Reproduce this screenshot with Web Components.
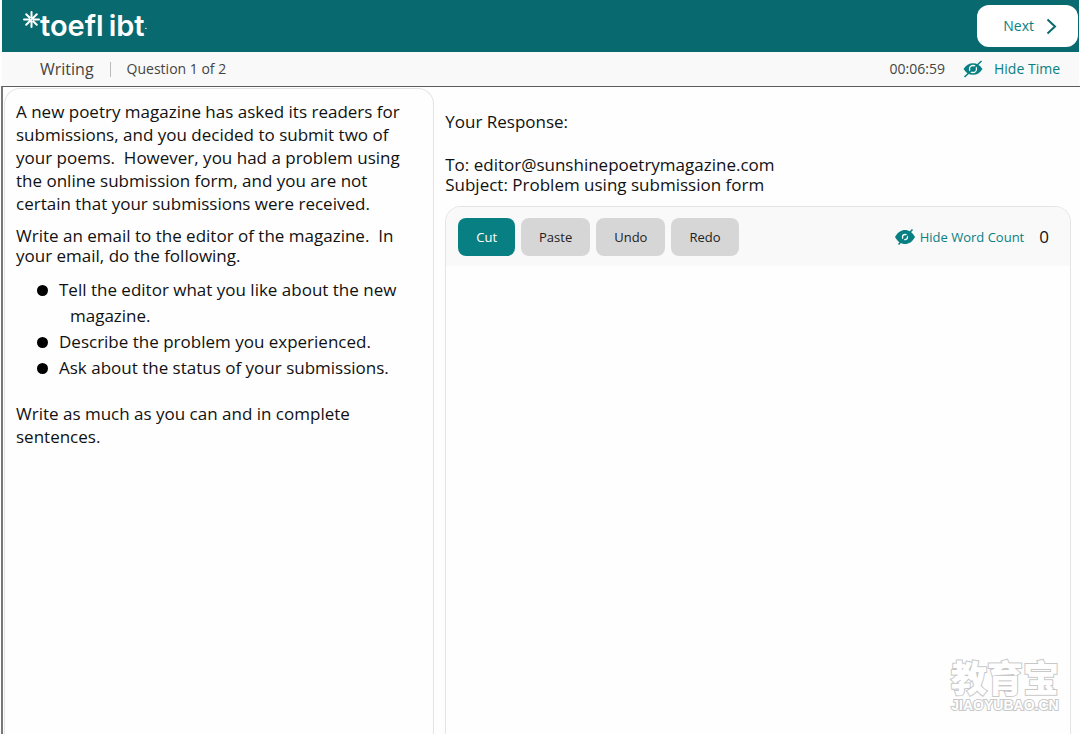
<!DOCTYPE html>
<html lang="en">
<head>
<meta charset="UTF-8">
<meta name="viewport" content="width=device-width, initial-scale=1.0">
<title>Writing - Question 1 of 2</title>
<style>
    html, body {
        margin: 0;
        height: 100%;
    }

    body {
        font-family: "Open Sans", "Noto Sans", sans-serif;
        color: #111;
        background: #fefefe;
        overflow: hidden;
        --teal-dark: #086a6e;
        --teal: #088083;
        --bar: #f9f9f9;
        --line: #e4e4e4;
    }
</style>
</head>
<body>
<toefl-app>
    <toefl-header slot="header"></toefl-header>
    <section-bar slot="bar" time="00:06:59">
        <span slot="section">Writing</span>
        <span slot="question">Question 1 of 2</span>
    </section-bar>
    <prompt-panel slot="prompt">
        <p>A new poetry magazine has asked its readers for submissions, and you decided to submit two of your poems.&nbsp; However, you had a problem using the online submission form, and you are not certain that your submissions were received.</p>
        <p class="tight">Write an email to the editor of the magazine.&nbsp; In your email, do the following.</p>
        <ul>
            <li>Tell the editor what you like about the new magazine.</li>
            <li>Describe the problem you experienced.</li>
            <li>Ask about the status of your submissions.</li>
        </ul>
        <p>Write as much as you can and in complete sentences.</p>
    </prompt-panel>
    <response-panel slot="response">
        <span slot="to">To: editor@sunshinepoetrymagazine.com</span>
        <span slot="subject">Subject: Problem using submission form</span>
    </response-panel>
    <site-watermark slot="mark"></site-watermark>
</toefl-app>

<script>
class ToeflApp extends HTMLElement {
    connectedCallback() {
        this.attachShadow({ mode: 'open' });
        this.shadowRoot.innerHTML = `
            <style>
                :host {
                    display: flex;
                    flex-direction: column;
                    height: 100vh;
                    position: relative;
                }

                .top {
                    margin: 0 1px 0 2px;
                }

                main {
                    flex: 1;
                    min-height: 0;
                    display: grid;
                    grid-template-columns: minmax(0, 11fr) minmax(0, 16fr);
                    column-gap: 11px;
                    margin-left: 1px;
                    padding: 1px 9px 0 1px;
                    border-left: 2px solid #777;
                    border-top: 1px solid #5c5c5c;
                }
            </style>

            <div class="top">
                <slot name="header"></slot>
                <slot name="bar"></slot>
            </div>
            <main>
                <slot name="prompt"></slot>
                <slot name="response"></slot>
            </main>
            <slot name="mark"></slot>
        `;
    }
}

class ToeflHeader extends HTMLElement {
    connectedCallback() {
        this.attachShadow({ mode: 'open' });
        this.shadowRoot.innerHTML = `
            <style>
                :host {
                    display: flex;
                    align-items: center;
                    justify-content: space-between;
                    height: 52px;
                    padding: 0 1px 0 21px;
                    background: var(--teal-dark);
                }

                .logo {
                    display: flex;
                    align-items: center;
                    color: #fff;
                    font: 600 29px/32px Inter, sans-serif;
                    text-decoration: none;
                }

                .logo svg {
                    width: 17px;
                    height: 17px;
                    margin-bottom: 13px;
                }

                .name {
                    display: flex;
                    gap: 5px;
                }

                small {
                    font-size: 8px;
                    align-self: flex-end;
                }

                button {
                    display: flex;
                    align-items: center;
                    gap: 12px;
                    height: 42px;
                    padding: 0 21px 0 26px;
                    border: 0;
                    border-radius: 12px;
                    background: #fff;
                    color: var(--teal);
                    font: 14px/20px "Open Sans", sans-serif;
                }

                button svg {
                    width: 11px;
                    height: 17px;
                }
            </style>

            <a class="logo" href="#">
                <svg viewBox="0 0 17 17" stroke="#fff" stroke-width="2" stroke-linecap="round">
                    <path d="M8.5 1v5M8.5 11v5M1 8.5h5M11 8.5h5M3.2 3.2l3.6 3.6M13.8 3.2L8.5 8.5l-5.3 5.3M10.2 10.2l3.6 3.6"/>
                </svg>
                <span class="name"><span>toefl</span><span>ibt</span></span><small>.</small>
            </a>
            <button type="button">
                Next
                <svg viewBox="0 0 11 17" fill="none" stroke="#086a6e" stroke-width="2">
                    <path d="M1.5 1.5l7.5 7-7.5 7"/>
                </svg>
            </button>
        `;
    }
}

// Crossed-out eye shared by the "Hide" buttons, "solid" has the heavier lids and a short slash
class EyeIcon extends HTMLElement {
    connectedCallback() {
        const solid = this.hasAttribute('solid');
        const lids = solid
            ? 'M0 9C3 4 6 2 10 2s7 2 10 7c-3 5-6 7-10 7S3 14 0 9z'
            : 'M.5 9C3 5 6 3.200 10 3.200S17 5 19.500 9C17 13 14 14.800 10 14.800S3 13 .5 9z';
        const slash = solid ? 'M3.500 16.500L17.500 1.500' : 'M1.500 17L18.500 1';

        this.attachShadow({ mode: 'open' });
        this.shadowRoot.innerHTML = `
            <style>
                :host {
                    display: block;
                    width: 20px;
                    height: 18px;
                }

                svg {
                    display: block;
                    width: 100%;
                    height: 100%;
                }
            </style>

            <svg viewBox="0 0 20 18">
                <path fill="#088083" d="${lids}"/>
                <circle cx="10" cy="9" r="${solid ? 2.5 : 3.5}" fill="none" stroke="#f9f9f9" stroke-width="1.300"/>
                <path d="${slash}" stroke="#088083" stroke-width="1.600"/>
            </svg>
        `;
    }
}

class SectionBar extends HTMLElement {
    connectedCallback() {
        this.attachShadow({ mode: 'open' });
        this.shadowRoot.innerHTML = `
            <style>
                :host {
                    display: flex;
                    align-items: center;
                    height: 34px;
                    padding: 0 19px 0 38px;
                    background: var(--bar);
                    color: #444;
                    font-size: 14px;
                    line-height: 20px;
                }

                ::slotted([slot="section"]) {
                    font-size: 16px;
                }

                .divider {
                    width: 1px;
                    height: 15px;
                    margin: 0 16px;
                    background: #bbb;
                }

                time {
                    margin-left: auto;
                }

                button {
                    display: flex;
                    align-items: center;
                    gap: 11px;
                    margin-left: 18px;
                    padding: 0;
                    border: 0;
                    background: none;
                    color: var(--teal);
                    font: inherit;
                }
            </style>

            <slot name="section"></slot>
            <span class="divider"></span>
            <slot name="question"></slot>
            <time>${this.getAttribute('time')}</time>
            <button type="button"><eye-icon></eye-icon>Hide Time</button>
        `;
    }
}

class PromptPanel extends HTMLElement {
    connectedCallback() {
        this.attachShadow({ mode: 'open' });
        this.shadowRoot.innerHTML = `
            <style>
                :host {
                    display: block;
                    box-sizing: border-box;
                    padding: 11px 24px 0 11px;
                    border: 1px solid var(--line);
                    border-bottom: 0;
                    border-radius: 16px 16px 0 0;
                    font-size: 17px;
                    line-height: 23px;
                }

                ::slotted(p) {
                    margin: 0 0 11px;
                }

                ::slotted(p.tight) {
                    line-height: 20px;
                }

                ::slotted(ul) {
                    margin: 0 0 21px;
                    padding: 0 0 0 54px;
                    list-style: none;
                    line-height: 26px;
                    text-indent: -11px;
                }
            </style>

            <slot></slot>
        `;

        this.querySelectorAll('li').forEach(li => {
            li.prepend(document.createElement('bullet-dot'));
        });
    }
}

class BulletDot extends HTMLElement {
    connectedCallback() {
        this.attachShadow({ mode: 'open' });
        this.shadowRoot.innerHTML = `
            <style>
                :host {
                    display: inline-block;
                    width: 11px;
                    height: 11px;
                    margin: 0 11px 0 -22px;
                    border-radius: 50%;
                    background: #000;
                }
            </style>
        `;
    }
}

class ResponsePanel extends HTMLElement {
    connectedCallback() {
        this.attachShadow({ mode: 'open' });
        this.shadowRoot.innerHTML = `
            <style>
                :host {
                    display: flex;
                    flex-direction: column;
                    min-height: 0;
                    padding-top: 24px;
                    font-size: 17px;
                    line-height: 20px;
                }

                .mail {
                    display: flex;
                    flex-direction: column;
                    margin: 23px 0 11px;
                }

                .editor {
                    flex: 1;
                    min-height: 0;
                    display: flex;
                    flex-direction: column;
                    overflow: hidden;
                    border: 1px solid var(--line);
                    border-bottom: 0;
                    border-radius: 16px 16px 0 0;
                }

                .toolbar {
                    display: flex;
                    align-items: center;
                    gap: 6px;
                    padding: 11px 21px 10px 12px;
                    background: var(--bar);
                }

                button {
                    height: 38px;
                    padding: 0 18px;
                    border: 0;
                    border-radius: 8px;
                    background: #d6d6d6;
                    color: #222;
                    font: 13px/18px "Open Sans", sans-serif;
                }

                .primary {
                    background: var(--teal);
                    color: #fff;
                }

                .hide {
                    display: flex;
                    align-items: center;
                    gap: 5px;
                    margin-left: auto;
                    padding: 0;
                    background: none;
                    color: var(--teal);
                }

                output {
                    margin-left: 9px;
                }

                textarea {
                    flex: 1;
                    padding: 12px;
                    border: 0;
                    outline: 0;
                    resize: none;
                    background: #fefefe;
                    font: inherit;
                }
            </style>

            <label for="answer">Your Response:</label>
            <div class="mail">
                <slot name="to"></slot>
                <slot name="subject"></slot>
            </div>
            <div class="editor">
                <div class="toolbar">
                    <button type="button" class="primary">Cut</button>
                    <button type="button">Paste</button>
                    <button type="button">Undo</button>
                    <button type="button">Redo</button>
                    <button type="button" class="hide"><eye-icon solid></eye-icon>Hide Word Count</button>
                    <output for="answer">0</output>
                </div>
                <textarea id="answer"></textarea>
            </div>
        `;
    }
}

class SiteWatermark extends HTMLElement {
    connectedCallback() {
        this.attachShadow({ mode: 'open' });
        this.shadowRoot.innerHTML = `
            <style>
                :host {
                    position: absolute;
                    right: 21px;
                    bottom: 20px;
                    display: flex;
                    flex-direction: column;
                    align-items: center;
                    color: #fff;
                    -webkit-text-stroke: 2px #c8c8c8;
                    paint-order: stroke fill;
                    pointer-events: none;
                }

                .zh {
                    font: 900 36px/40px "Noto Sans CJK SC", sans-serif;
                }

                .en {
                    font: 700 14px/18px "Liberation Sans", sans-serif;
                }
            </style>

            <span class="zh" lang="zh">教育宝</span>
            <span class="en">JIAOYUBAO.CN</span>
        `;
    }
}

customElements.define('eye-icon', EyeIcon);
customElements.define('bullet-dot', BulletDot);
customElements.define('toefl-app', ToeflApp);
customElements.define('toefl-header', ToeflHeader);
customElements.define('section-bar', SectionBar);
customElements.define('prompt-panel', PromptPanel);
customElements.define('response-panel', ResponsePanel);
customElements.define('site-watermark', SiteWatermark);
</script>
</body>
</html>
